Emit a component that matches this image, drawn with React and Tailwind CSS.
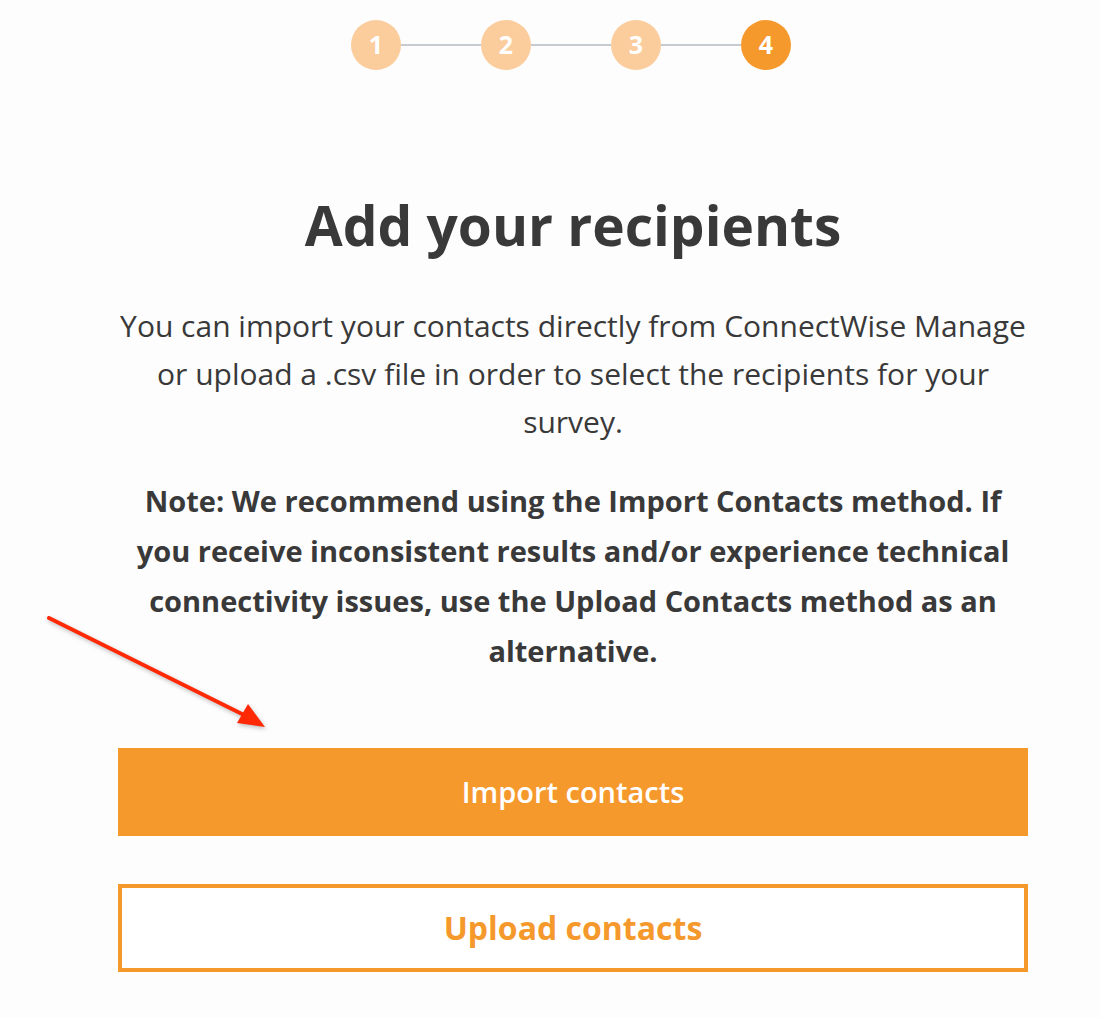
import React from 'react';

const steps = [1, 2, 3, 4];

function Stepper() {
  return (
    <div className="flex items-center justify-center pt-5 pl-[42px]">
      {steps.map((n, i) => (
        <React.Fragment key={n}>
          {i > 0 && <div className="h-[2px] w-[80px] bg-[#c6cbd1]" />}
          <div
            className={`flex h-[50px] w-[50px] items-center justify-center rounded-full text-[25px] font-bold text-white ${
              n === 4 ? 'bg-[#f6992d]' : 'bg-[#fbcc9c]'
            }`}
          >
            {n}
          </div>
        </React.Fragment>
      ))}
    </div>
  );
}

function Arrow() {
  return (
    <svg
      className="absolute left-[40px] top-[610px]"
      width="240"
      height="130"
      viewBox="0 0 240 130"
      style={{ filter: 'drop-shadow(1px 2px 2px rgba(0,0,0,0.25))' }}
    >
      <line x1="9" y1="8" x2="206" y2="106" stroke="#ff2a05" strokeWidth="4" strokeLinecap="round" />
      <polygon points="225,117 197,113 208,94" fill="#ff2a05" />
    </svg>
  );
}

export default function App() {
  return (
    <div
      className="relative min-h-[1018px] w-[1100px] bg-[#fdfdfd] text-[#393939]"
      style={{ fontFamily: '"Open Sans", Lato, sans-serif' }}
    >
      <Stepper />
      <Arrow />
      <div className="ml-[118px] w-[910px] text-center">
        <h1 className="mt-[120px] text-[55px] font-bold leading-[70px] text-[#393939]">Add your recipients</h1>
        <p className="mx-auto mt-[42px] w-[910px] text-[30px] leading-[48px]">
          You can import your contacts directly from ConnectWise Manage or upload a .csv file in order to select the
          recipients for your survey.
        </p>
        <p className="mx-auto mt-[30px] w-[880px] text-[29px] font-bold leading-[50px]">
          Note: We recommend using the Import Contacts method. If you receive inconsistent results and/or experience
          technical connectivity issues, use the Upload Contacts method as an alternative.
        </p>
        <button className="mt-[72px] flex h-[88px] w-full items-center justify-center bg-[#f6992d] text-[29px] font-semibold text-white">
          Import contacts
        </button>
        <button className="mt-[48px] flex h-[88px] w-full items-center justify-center border-4 border-[#f6992d] bg-white text-[32px] font-bold text-[#f6992d]">
          Upload contacts
        </button>
      </div>
    </div>
  );
}
